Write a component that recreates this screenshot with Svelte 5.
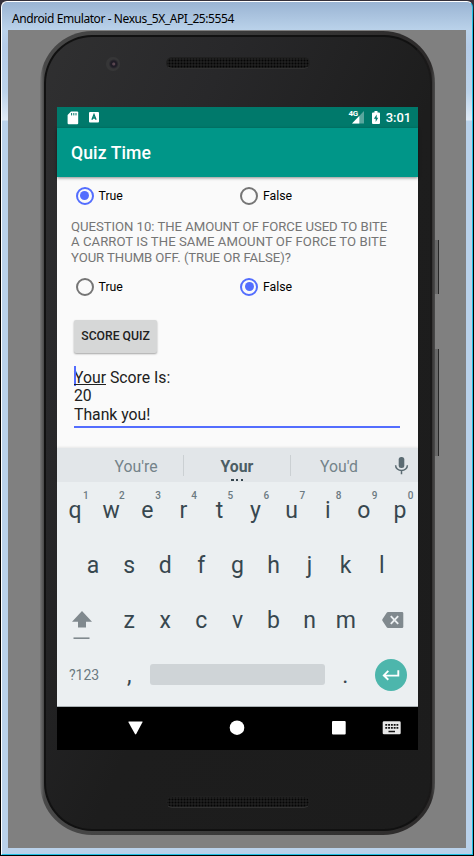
<script>
  const rowOne = 'qwertyuiop'.split('').map((k, i) => ({ k, hint: String((i + 1) % 10) }));
  const rowTwo = 'asdfghjkl'.split('');
  const rowThree = 'zxcvbnm'.split('');
</script>

{#snippet radio(label, on)}
  <label class="radio">
    <span class="ring" class:on></span>
    <span class="rlabel">{label}</span>
  </label>
{/snippet}

<div class="window">
  <div class="frame">
    <div class="titlebar"><span>Android Emulator - Nexus_5X_API_25:5554</span></div>
    <div class="desk">
      <div class="sidekey power"></div>
      <div class="sidekey volume"></div>
      <div class="phone">
        <div class="face">
          <div class="top">
            <div class="camera"></div>
            <div class="speaker"></div>
          </div>
          <div class="screen">
            <div class="status">
              <svg class="sd" width="12" height="14" viewBox="0 0 12 14"><path d="M4 .5h6.2q1 0 1 1v10.7q0 1-1 1H1.6q-1 0-1-1V4z" fill="#fff"/><path d="M4.6 2v2.4M6.8 2v2.4M9 2v2.4" stroke="#00796b" stroke-width="1"/></svg>
              <svg class="app" width="10" height="11" viewBox="0 0 10 11"><rect width="10" height="10.6" rx="1" fill="#fff"/><path d="M2.900 7.700 5 2.500 7.100 7.700M3.600 6h2.800" fill="none" stroke="#00796b" stroke-width="1.300"/></svg>
              <span class="grow"></span>
              <span class="g4">4G</span>
              <svg class="sig" width="12" height="13" viewBox="0 0 12 13"><path d="M12 0v12.5H0z" fill="#fff" opacity=".35"/><path d="M7.3 5v7.5H0z" fill="#fff"/></svg>
              <svg class="bat" width="8" height="13" viewBox="0 0 8 13"><path d="M2.5 0h3v1.4H7q1 0 1 1V12q0 1-1 1H1q-1 0-1-1V2.400q0-1 1-1h1.500z" fill="#fff"/><path d="M4.700 3.500 1.900 7.800H3.700V11L6.200 6.700H4.700z" fill="#00796b"/></svg>
              <span class="clock">3:01</span>
            </div>
            <div class="toolbar">Quiz Time</div>
            <div class="content">
              <div class="radios">{@render radio('True', true)}{@render radio('False', false)}</div>
              <div class="question">
                <div class="q1">QUESTION 10: THE AMOUNT OF FORCE USED TO BITE</div>
                <div class="q2">A CARROT IS THE SAME AMOUNT OF FORCE TO BITE</div>
                <div class="q3">YOUR THUMB OFF. (TRUE OR FALSE)?</div>
              </div>
              <div class="radios second">{@render radio('True', false)}{@render radio('False', true)}</div>
              <button class="score">SCORE QUIZ</button>
              <div class="result">
                <div><span class="compose">Your</span> Score Is:</div>
                <div>20</div>
                <div>Thank you!</div>
              </div>
            </div>
            <div class="suggest">
              <span class="s1">You're</span>
              <i></i>
              <span class="s2">Your<b class="more"></b></span>
              <i></i>
              <span class="s3">You'd</span>
              <svg width="15" height="18" viewBox="0 0 15 18"><rect x="4.700" y="0" width="5.600" height="11" rx="2.500" fill="#5b6b72"/><path d="M1.600 8.200a5.900 5.300 0 0 0 11.800 0M7.500 13.500v3.700" fill="none" stroke="#5b6b72" stroke-width="1.500"/></svg>
            </div>
            <div class="keyboard">
              <div class="row">
                {#each rowOne as key}<span class="key">{key.k}<em>{key.hint}</em></span>{/each}
              </div>
              <div class="row inset">
                {#each rowTwo as key}<span class="key">{key}</span>{/each}
              </div>
              <div class="row">
                <span class="wide shift"><svg width="22" height="30" viewBox="0 0 22 30"><path d="M11 1 21 11.700H15V17.400H7V11.700H1z" fill="#80898e"/><path d="M2.500 28.200h16" stroke="#80898e" stroke-width="1.600"/></svg></span>
                {#each rowThree as key}<span class="key">{key}</span>{/each}
                <span class="wide"><svg class="del" width="22" height="16" viewBox="0 0 22 16"><path d="M6 0h14q1.300 0 1.300 1.300v13.400q0 1.300-1.300 1.300H6q-.8 0-1.300-.8L.4 8.700q-.4-.7 0-1.400L4.700.8Q5.200 0 6 0z" fill="#80898e"/><path d="m8.800 4.200 7.400 7.600m0-7.600-7.400 7.600" stroke="#ebeff1" stroke-width="1.900"/></svg></span>
              </div>
              <div class="row last">
                <span class="wide sym">?123</span>
                <span class="key comma">,</span>
                <span class="space"></span>
                <span class="key dot">.</span>
                <span class="wide"><span class="enter"><svg width="18" height="14" viewBox="0 0 18 14"><path d="M16.300 2.200v5.400H2M6.300 2.800 1.800 7.400l4.500 4.400" fill="none" stroke="#fff" stroke-width="1.900"/></svg></span></span>
              </div>
            </div>
            <div class="nav">
              <svg width="361" height="43" viewBox="0 0 361 43"><path d="M72 14.500h13.200q.7 0 .4.600L79.200 27q-.6.900-1.200 0L71.300 15.100q-.2-.6.700-.6z" fill="#fff"/><circle cx="180" cy="20.700" r="7.300" fill="#fff"/><rect x="275" y="14" width="13.700" height="13.500" rx="1" fill="#fff"/><rect x="325.700" y="14.300" width="18" height="13" rx="1.300" fill="#e8e8e8"/><path d="M328.300 17.900h13M328.300 20.900h13" stroke="#111" stroke-width="1.700" stroke-dasharray="1.900 .9"/><path d="M331.500 24.500h6.500" stroke="#111" stroke-width="1.500"/></svg>
            </div>
          </div>
          <div class="bottom"><div class="speaker"></div></div>
        </div>
      </div>
    </div>
  </div>
</div>

<style>
  :global(body) { margin: 0; background: #000; }
  * { box-sizing: border-box; }
  .window { width: 474px; height: 856px; background: linear-gradient(#35303a 0 2px, #000 30px); overflow: hidden; padding: 1px 1px 1px; font-family: Roboto, 'Liberation Sans', sans-serif; }
  .frame { height: 854px; border: 1px solid #fff; border-right: 1px solid #1fbfe4; border-bottom: 1px solid #1fbfe4; border-radius: 6px 6px 0 0; background: linear-gradient(#9ab4d3 0, #bad2ea 28px, #b5cce8 45px, #bcd3ea 90px, #e0ebf6 118px, #b9d1ea 119px); padding: 0 6px; }
  .titlebar { height: 28px; padding: 6px 0 0 4px; font: 12px/22px 'Noto Sans', 'Open Sans', sans-serif; color: #000; white-space: nowrap; }
  .titlebar span { display: inline-block; line-height: 20px; letter-spacing: -0.42px; }
  .desk { position: relative; height: 818px; width: 458px; background: #808080; padding: 1px 0 0 32px; }
  .sidekey { position: absolute; left: 427px; width: 4px; background: #686868; border-right: 1px solid #292929; }
  .power { top: 210px; height: 54px; }
  .volume { top: 319px; height: 107px; }
  .phone { position: relative; width: 395px; height: 804px; border-radius: 52px; padding: 4px 3px 4px 4px; background: linear-gradient(90deg, #777 0, #484848 4px, #3a3a3a 50%, #2c2a2a 391px, #4c4c4c 395px); }
  .face { width: 388px; height: 796px; border: 2px solid #111; border-right-color: #1a1919; border-radius: 48px; background: linear-gradient(115deg, #303031 0, #28282a 25%, #1d1d1d 55%, #1c1c1c); padding: 0 11px; }
  .top { position: relative; height: 70px; display: flex; justify-content: center; padding-top: 20px; }
  .camera { position: absolute; left: 49px; top: 20px; width: 14px; height: 14px; border-radius: 50%; background: radial-gradient(circle at 55% 50%, #5a4650 0 1px, #1f1c26 2px 3px, #363637 5px); }
  .speaker { width: 144px; height: 12px; border-radius: 6px; background: radial-gradient(circle, #050505 0 .7px, transparent 1.200px) 1px 1px / 3px 3px, #1e1e1e; border: 1px solid #202020; border-bottom-color: #303030; }
  .screen { width: 361px; height: 643px; display: flex; flex-direction: column; background: #fafafa; }
  .status { height: 21px; background: #00796b; display: flex; align-items: center; padding: 0 7px 0 10px; color: #fff; }
  .status svg { display: block; flex: none; }
  .app { margin-left: 9.500px; }
  .grow { flex: 1; }
  .g4 { font-size: 8px; font-weight: 700; line-height: 8px; align-self: flex-start; margin-top: 3px; letter-spacing: -.4px; margin-right: -6px; }
  .bat { margin: 0 6px 0 8px; }
  .clock { font-size: 13px; font-weight: 500; letter-spacing: -.1px; line-height: 21px; }
  .toolbar { position: relative; height: 49px; background: #009688; color: #fff; font-weight: 500; font-size: 17.600px; letter-spacing: .1px; line-height: 50px; padding-left: 14px; box-shadow: 0 1px 3px rgba(0,0,0,.45); }
  .content { height: 271px; padding: 9px 0 0 14px; color: #000; }
  .radios { display: flex; padding-left: 4.500px; }
  .radio { display: flex; align-items: center; width: 164.500px; height: 19px; }
  .ring { width: 18px; height: 18px; border: 2px solid #757575; border-radius: 50%; display: flex; align-items: center; justify-content: center; }
  .ring.on { border-color: #536dfe; }
  .ring.on::after { content: ''; width: 9px; height: 9px; border-radius: 50%; background: #536dfe; }
  .rlabel { font-size: 12.300px; line-height: 18px; margin-left: 5px; }
  .question { margin-top: 14px; color: #757575; font-size: 13.140px; line-height: 15.400px; height: 46px; white-space: nowrap; }
  .q1 { letter-spacing: -.03px; }
  .q2 { letter-spacing: .06px; }
  .q3 { letter-spacing: -.05px; }
  .second { margin-top: 12px; }
  .score { display: block; margin: 24px 0 0 3px; width: 83px; height: 33px; border: 0; padding: 0; border-radius: 2px; background: #d6d7d7; box-shadow: 0 1px 2px rgba(0,0,0,.35); font: 500 12.200px/33px Roboto, sans-serif; color: #212121; }
  .result { margin: 15px 0 0 3px; width: 326px; height: 60px; padding-top: 1px; border-bottom: 2px solid #536dfe; font-size: 15.770px; line-height: 18.400px; color: #212121; white-space: nowrap; }
  .compose { position: relative; display: inline-block; height: 18.400px; }
  .compose::before { content: ''; position: absolute; left: 0; top: -3px; width: 1.500px; height: 20px; background: #536dfe; }
  .compose::after { content: ''; position: absolute; left: 0; right: 0; top: 15px; height: 1px; background: #212121; }
  .suggest { height: 34px; background: #e2e6e9; display: flex; align-items: center; color: #74838a; font-size: 15.800px; box-shadow: 0 -1px 2px rgba(0,0,0,.08); }
  .suggest span { text-align: center; line-height: 38px; height: 34px; }
  .suggest i { width: 1px; height: 21px; background: #cbd0d3; margin-top: 0; }
  .s1 { width: 126px; padding-left: 32px; }
  .s2 { width: 106px; position: relative; font-weight: 700; color: #4c5d64; }
  .s3 { width: 96px; }
  .more { position: absolute; left: 47px; bottom: 1px; width: 14px; height: 2px; background: repeating-linear-gradient(90deg, #37474f 0 2.500px, transparent 2.500px 5px); }
  .suggest svg { margin-left: 7px; margin-top: 1px; }
  .keyboard { height: 225px; background: #ebeff1; border-bottom: 1px solid #a9b0b3; color: #37474f; font-size: 23px; padding-top: 1px; }
  .row { height: 55px; display: flex; }
  .inset { padding: 0 18px; }
  .key { position: relative; width: 36.100px; height: 55px; line-height: 55px; text-align: center; flex: none; }
  .key em { position: absolute; left: 26px; top: 6px; font: 500 10px/14px Roboto, sans-serif; color: #6b7a81; }
  .wide { width: 54.150px; height: 55px; display: flex; align-items: center; justify-content: center; flex: none; }
  .shift { padding: 8px 5px 0 0; }
  .del { margin-left: 4px; margin-top: -2px; }
  .last .wide { height: 53px; }
  .sym { font-size: 14px; color: #6b7a81; }
  .space { width: 175px; height: 21px; border-radius: 3px; background: #cfd4d7; margin: 16px 2.500px 0 2.500px; flex: none; }
  .enter { width: 32px; height: 32px; border-radius: 50%; background: #4db6ac; display: flex; align-items: center; justify-content: center; margin-left: 1px; }
  .nav { height: 43px; background: #000; }
  .nav svg { display: block; }
  .bottom { height: 80px; padding-top: 46px; display: flex; justify-content: center; }
</style>
